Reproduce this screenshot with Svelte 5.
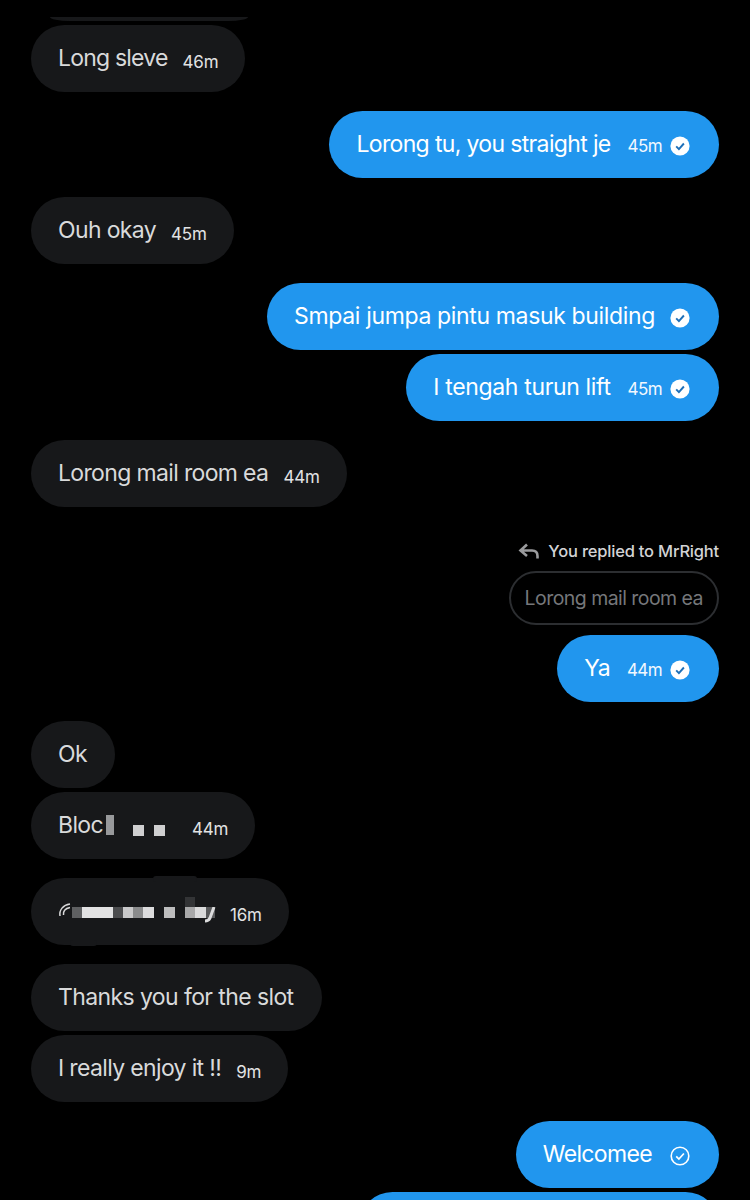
<script>
  // censored bits of the screenshot, as [width, colour] runs
  const blur = [
    [10, '#5f6062'], [31, '#e2e2e3'], [10, '#4c4d4f'], [10, '#c9c9ca'], [10, '#8a8b8c'], [11, '#dcdcdd'],
    [10, 'transparent'], [11, '#bdbdbe'], [10, 'transparent'], [10, '#a8a8a9'], [11, '#dadadb'], [9, '#58595b']
  ]
</script>

{#snippet check()}
  <svg class="tick" viewBox="0 0 20 20" width="20" height="20">
    <circle cx="10" cy="10" r="9.6" fill="#fff" />
    <path d="M6.2 10.4l2.7 2.7 5-5.6" fill="none" stroke="#1d6fb8" stroke-width="1.9" />
  </svg>
{/snippet}

<main>
  <div class="sliver"></div>

  <section class="group left">
    <div class="bubble tight">Long sleve<time>46m</time></div>
  </section>

  <section class="group right">
    <div class="bubble">Lorong tu, you straight je<time>45m</time>{@render check()}</div>
  </section>

  <section class="group left">
    <div class="bubble">Ouh okay<time>45m</time></div>
  </section>

  <section class="group right">
    <div class="bubble loose">Smpai jumpa pintu masuk building<span class="gap"></span>{@render check()}</div>
    <div class="bubble loose">I tengah turun lift<time>45m</time>{@render check()}</div>
  </section>

  <section class="group left">
    <div class="bubble">Lorong mail room ea<time>44m</time></div>
  </section>

  <section class="group right reply">
    <div class="replied">
      <svg viewBox="0 0 22 18" width="22" height="18">
        <path d="M9 2.500L2.500 8.500 9 14M3 8.500h11c3.500 0 5.500 2 5.500 5.500v2.500" fill="none" stroke="#9a9b9d" stroke-width="2.6" />
      </svg>
      You replied to MrRight
    </div>
    <div class="quoted">Lorong mail room ea</div>
    <div class="bubble ya">Ya<time>44m</time>{@render check()}</div>
  </section>

  <section class="group left">
    <div class="bubble plain">Ok</div>
    <div class="bubble bloc">
      Bloc<i class="k"></i><i class="sq first"></i><i class="sq"></i><time>44m</time>
    </div>
  </section>

  <section class="group left">
    <div class="bubble hidden-row">
      <svg class="at" viewBox="0 0 14 16" width="14" height="16">
        <path d="M2 14C1 8 5 3 12 2M5.500 13C5 9 7 6.500 12 5.500" fill="none" stroke="#d8d8d9" stroke-width="1.5" />
      </svg>
      <span class="runs">
        {#each blur as [w, c]}
          <i style="width:{w}px;background:{c}"></i>
        {/each}
        <svg class="tail" viewBox="0 0 12 16" width="12" height="16">
          <path d="M9 0L5 11C4 13 3 14 0 14" fill="none" stroke="#dcdcdd" stroke-width="3" />
        </svg>
      </span>
      <time>16m</time>
    </div>
  </section>

  <section class="group left">
    <div class="bubble plain">Thanks you for the slot</div>
    <div class="bubble">I really enjoy it !!<time>9m</time></div>
  </section>

  <section class="group right">
    <div class="bubble">Welcomee<svg class="tick wide" viewBox="0 0 20 20" width="20" height="20">
        <circle cx="10" cy="10" r="8.8" fill="none" stroke="#fff" stroke-width="1.6" />
        <path d="M6.200 10.400l2.700 2.700 5-5.600" fill="none" stroke="#fff" stroke-width="1.7" />
      </svg></div>
    <div class="bubble last"></div>
  </section>
</main>

<style>
  :global(body) {
    margin: 0;
    background: #000;
  }
  main {
    height: 1200px;
    overflow: hidden;
    background: #000;
    padding: 0 31px;
    box-sizing: border-box;
    display: flex;
    flex-direction: column;
    gap: 19px;
    font-family: Inter, "Liberation Sans", sans-serif;
  }
  .sliver {
    flex: none;
    height: 21px;
    width: 198px;
    margin: 0 0 -15px 19px;
    border-radius: 0 0 20px 20px / 0 0 4px 4px;
    background: linear-gradient(#000 80%, #17181a 80%);
  }
  .group {
    display: flex;
    flex-direction: column;
    gap: 4px;
    flex: none;
  }
  .left {
    align-items: flex-start;
  }
  .right {
    align-items: flex-end;
  }
  .bubble {
    display: flex;
    align-items: center;
    position: relative;
    height: 67px;
    box-sizing: border-box;
    padding: 0 27px 2px;
    border-radius: 34px;
    white-space: pre;
    font-size: 23px;
    letter-spacing: -0.65px;
    color: #d9dadb;
    background: #17181a;
  }
  .right .bubble {
    color: #fff;
    background: #2196ee;
    padding-right: 29px;
  }
  .loose {
    letter-spacing: -0.35px;
  }
  .tight {
    letter-spacing: -0.8px;
  }
  .plain {
    padding-right: 28px;
    letter-spacing: -0.6px;
  }
  .gap {
    width: 6px;
  }
  time {
    font-size: 17px;
    letter-spacing: -0.2px;
    margin-left: 15px;
    margin-top: 8px;
    color: #e2e3e4;
  }
  .right time {
    margin-left: 17px;
    margin-top: 4px;
    letter-spacing: -0.6px;
    color: #f2f8fe;
  }
  .tick {
    margin-left: 8px;
    margin-top: 4px;
    flex: none;
  }
  .gap + .tick {
    margin-left: 9px;
  }
  .tick.wide {
    margin-left: 18px;
  }
  .reply {
    margin-top: 9px;
  }
  .replied {
    display: flex;
    align-items: center;
    gap: 8px;
    height: 32px;
    font-size: 16.5px;
    letter-spacing: -0.2px;
    font-weight: 500;
    color: #d2d3d5;
  }
  .quoted {
    height: 54px;
    box-sizing: border-box;
    display: flex;
    align-items: center;
    padding: 0 14px;
    margin-bottom: 6px;
    border: 2px solid #2c2e31;
    border-radius: 27px;
    font-size: 19.5px;
    letter-spacing: -0.55px;
    color: #75777a;
  }
  .bloc i {
    display: block;
  }
  .k {
    width: 8px;
    height: 20px;
    margin: 0 0 0 3px;
    background: #98999b;
  }
  .sq {
    width: 11px;
    height: 11px;
    margin: 11px 0 0 10px;
    background: #cfcfd0;
  }
  .sq.first {
    margin-left: 19px;
  }
  .bloc time {
    margin-left: 27px;
  }
  .hidden-row::before,
  .hidden-row::after {
    content: "";
    position: absolute;
    background: #17181a;
    border-radius: 4px;
  }
  .hidden-row::before {
    left: 122px;
    top: -2px;
    width: 44px;
    height: 6px;
  }
  .hidden-row::after {
    left: 39px;
    bottom: -1px;
    width: 27px;
    height: 6px;
  }
  .hidden-row .at {
    flex: none;
    margin-top: -2px;
  }
  .runs {
    display: flex;
    height: 11px;
    margin-top: 3px;
    position: relative;
  }
  .runs i {
    display: block;
    height: 11px;
  }
  .runs i:nth-child(10)::before {
    content: "";
    display: block;
    height: 10px;
    margin-top: -10px;
    background: #333436;
  }
  .tail {
    position: absolute;
    right: -2px;
    top: 0;
  }
  .last {
    width: 360px;
  }
</style>
